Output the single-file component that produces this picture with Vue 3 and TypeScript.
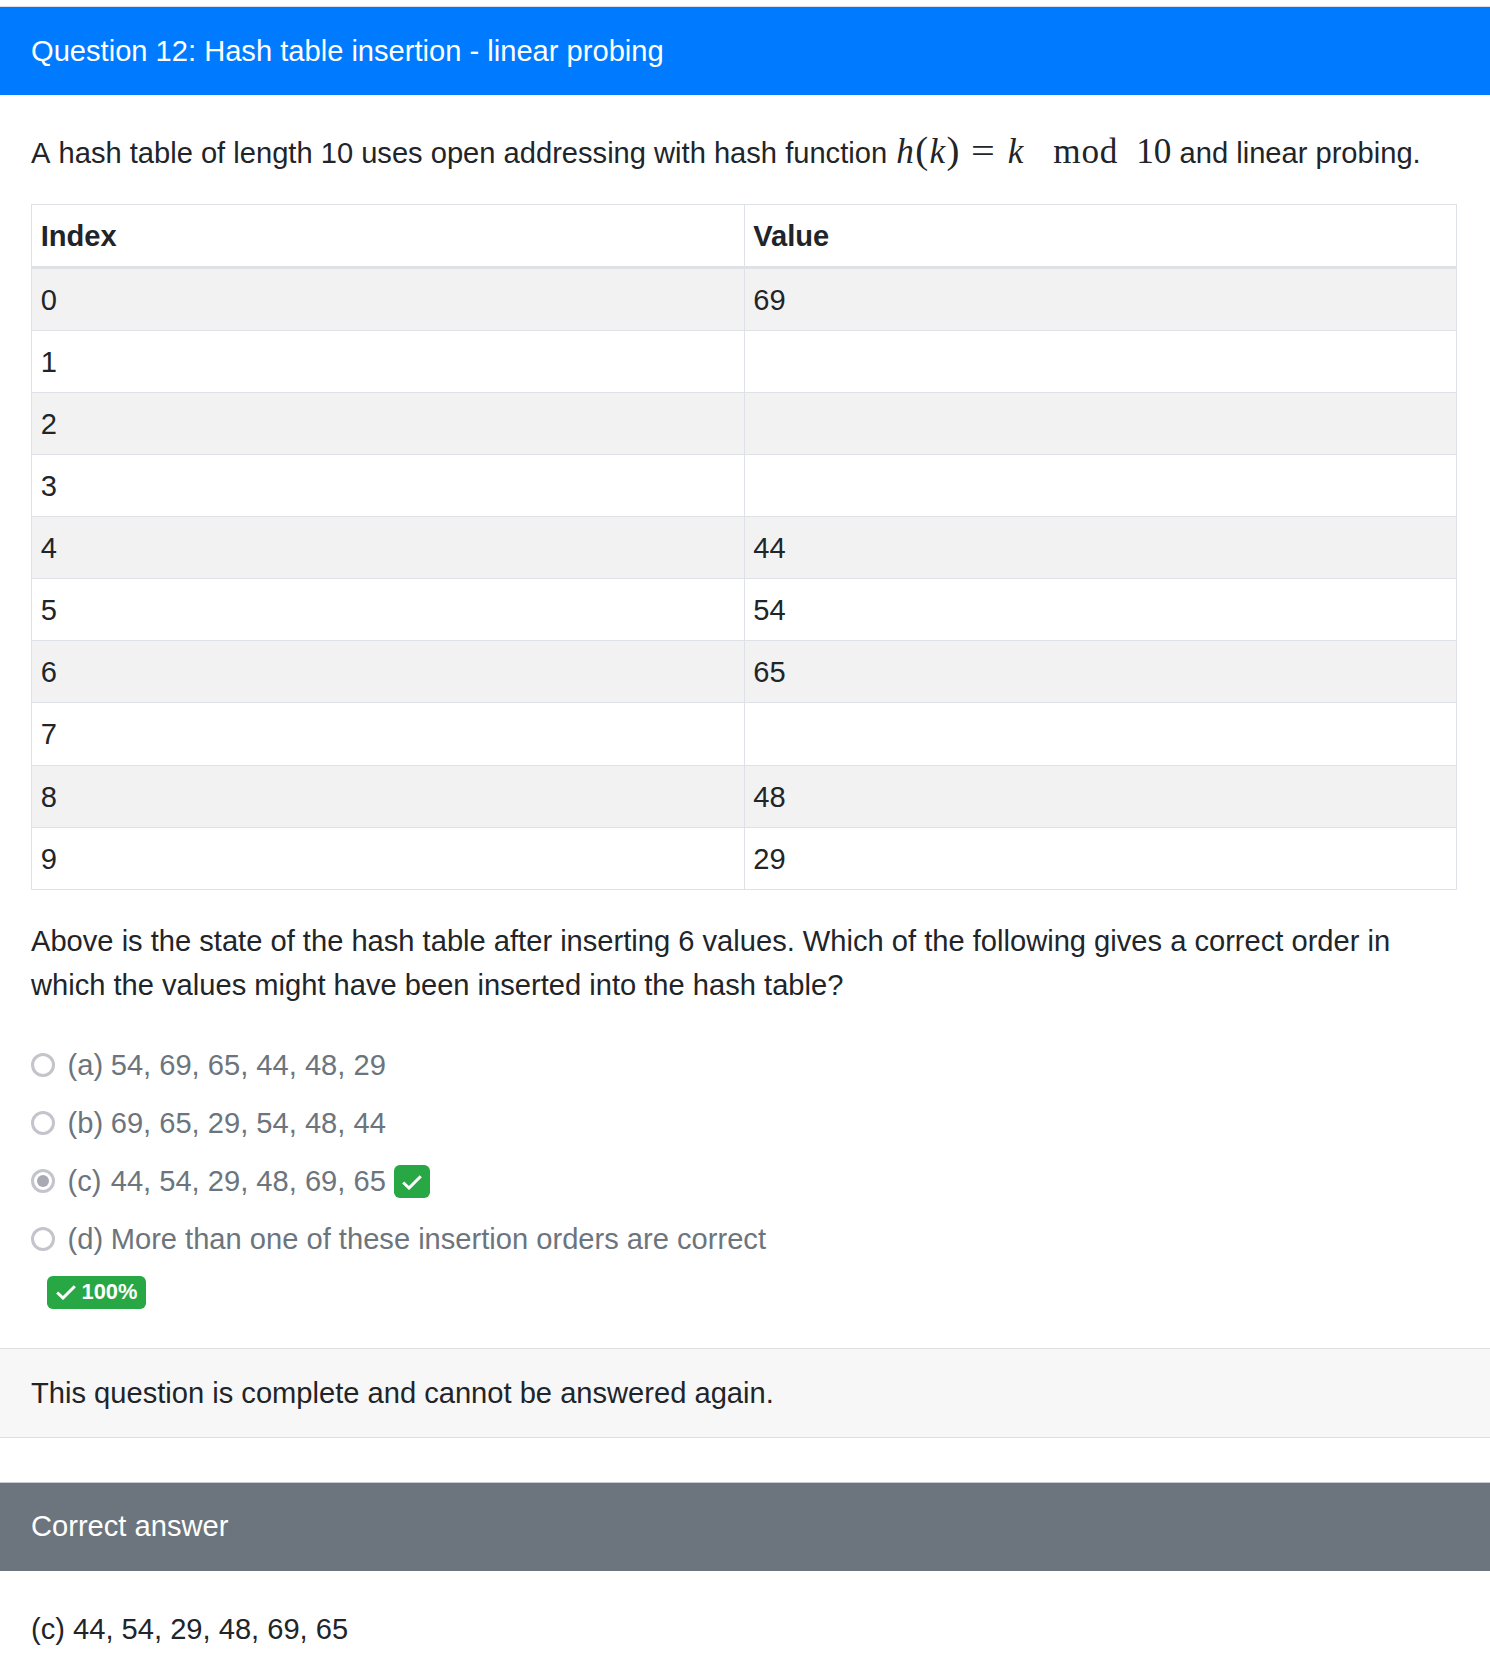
<script setup lang="ts">
const rows: [number, string][] = [
  [0, '69'], [1, ''], [2, ''], [3, ''], [4, '44'],
  [5, '54'], [6, '65'], [7, ''], [8, '48'], [9, '29'],
]
const options = [
  { key: '(a)', text: '54, 69, 65, 44, 48, 29', checked: false },
  { key: '(b)', text: '69, 65, 29, 54, 48, 44', checked: false },
  { key: '(c)', text: '44, 54, 29, 48, 69, 65', checked: true },
  { key: '(d)', text: 'More than one of these insertion orders are correct', checked: false },
]
</script>

<template>
  <div class="page">
    <section class="card">
      <header class="bar blue">Question 12: Hash table insertion - linear probing</header>
      <div class="body">
        <p class="intro">
          <span class="cap">A</span> hash table of length 10 uses open addressing with hash function
          <span class="math"><i class="h">h</i><span class="par">(</span><i>k</i><span class="par">)</span><span class="eq">=</span><i>k</i><span class="mod">mod</span><span class="ten">10</span></span>
          and linear probing.
        </p>
        <table class="tbl">
          <thead>
            <tr><th>Index</th><th>Value</th></tr>
          </thead>
          <tbody>
            <tr v-for="r in rows" :key="r[0]">
              <td>{{ r[0] }}</td>
              <td>{{ r[1] }}</td>
            </tr>
          </tbody>
        </table>
        <p class="prompt">
          Above is the state of the hash table after inserting 6 values. Which of the following gives a correct order in which the values might have been inserted into the hash table?
        </p>
        <div class="options">
          <div v-for="o in options" :key="o.key" class="option">
            <span class="radio" :class="{ on: o.checked }"></span>
            <span class="key">{{ o.key }}</span>
            <span class="label">{{ o.text }}</span>
            <span v-if="o.checked" class="badge square">
              <svg width="20" height="16" viewBox="0 0 20 16"><path d="M1.2 8.5 L7 14 L18.8 2.2" fill="none" stroke="#fff" stroke-width="3" /></svg>
            </span>
          </div>
        </div>
        <div class="score">
          <span class="badge">
            <svg width="20" height="16" viewBox="0 0 20 16"><path d="M1.2 8.5 L7 14 L18.8 2.2" fill="none" stroke="#fff" stroke-width="3" /></svg>
            100%
          </span>
        </div>
      </div>
      <footer class="foot">This question is complete and cannot be answered again.</footer>
    </section>
    <section class="card answer">
      <header class="bar gray">Correct answer</header>
      <div class="answer-body">(c) 44, 54, 29, 48, 69, 65</div>
    </section>
  </div>
</template>

<style>
html, body { margin: 0; background: #fff; }
</style>

<style scoped>
.page {
  height: 1672px;
  overflow: hidden;
  box-sizing: border-box;
  padding-top: 6px;
  font-family: "Liberation Sans", Arial, sans-serif;
  font-size: 29.12px;
  line-height: 43.68px;
  color: #212529;
}
.card { border-top: 1px solid #dfdfdf; }
.bar {
  height: 88px;
  box-sizing: border-box;
  padding: 22.5px 31px;
  color: #fff;
}
.blue { background: #007bff; }
.gray { background: #6c757d; }
.body { padding: 36.5px 33px 0 31px; }
p { margin: 0; }
.cap { font-kerning: none; }
.math {
  font-family: "Liberation Serif", "Times New Roman", serif;
  font-size: 35.2px;
  line-height: 0;
}
.h { margin-left: 1px; }
.par { font-size: 38.8px; margin: 0 1.4px; }
.eq { display: inline-block; margin: 0 15px 0 12px; transform: scaleX(1.2); }
.mod { margin: 0 18px 0 30px; letter-spacing: 0.8px; }
.tbl {
  width: 100%;
  margin-top: 28.5px;
  border-collapse: collapse;
  table-layout: fixed;
}
.tbl th, .tbl td {
  border: 1px solid #dee2e6;
  padding: 10px 8.7px 7.42px;
  height: 43.68px;
  text-align: left;
  font-weight: 400;
}
.tbl th {
  font-weight: 700;
  border-bottom-width: 3px;
}
.tbl tbody tr:nth-child(odd) { background: #f2f2f2; }
.prompt { margin-top: 30.3px; }
.options { margin-top: 29.2px; }
.option {
  display: flex;
  align-items: center;
  height: 58px;
  color: #6c757d;
}
.radio {
  width: 24px;
  height: 24px;
  box-sizing: border-box;
  border: 3px solid #c4c4cc;
  border-radius: 50%;
  margin: -2px 12.5px 0 0;
  position: relative;
  flex: none;
}
.radio.on::after {
  content: "";
  position: absolute;
  inset: 3px;
  border-radius: 50%;
  background: #a9a9b6;
}
.key { width: 43.2px; flex: none; }
.badge {
  display: inline-flex;
  align-items: center;
  gap: 6px;
  height: 33px;
  box-sizing: border-box;
  padding: 0 8.6px;
  background: #28a745;
  border-radius: 5.8px;
  color: #fff;
  font-size: 21.84px;
  font-weight: 700;
  line-height: 1;
}
.square { margin-left: 8px; width: 36px; padding: 0; justify-content: center; }
.score { margin: 7px 0 0 16px; display: flex; height: 33px; }
.foot {
  margin-top: 39px;
  height: 90px;
  box-sizing: border-box;
  padding: 23.5px 31px;
  background: #f7f7f7;
  border-top: 1px solid #dfdfdf;
  border-bottom: 1px solid #dfdfdf;
}
.answer { margin-top: 44px; border-top-color: #c8ccd0; }
.answer-body { padding: 37.5px 31px; }
</style>
